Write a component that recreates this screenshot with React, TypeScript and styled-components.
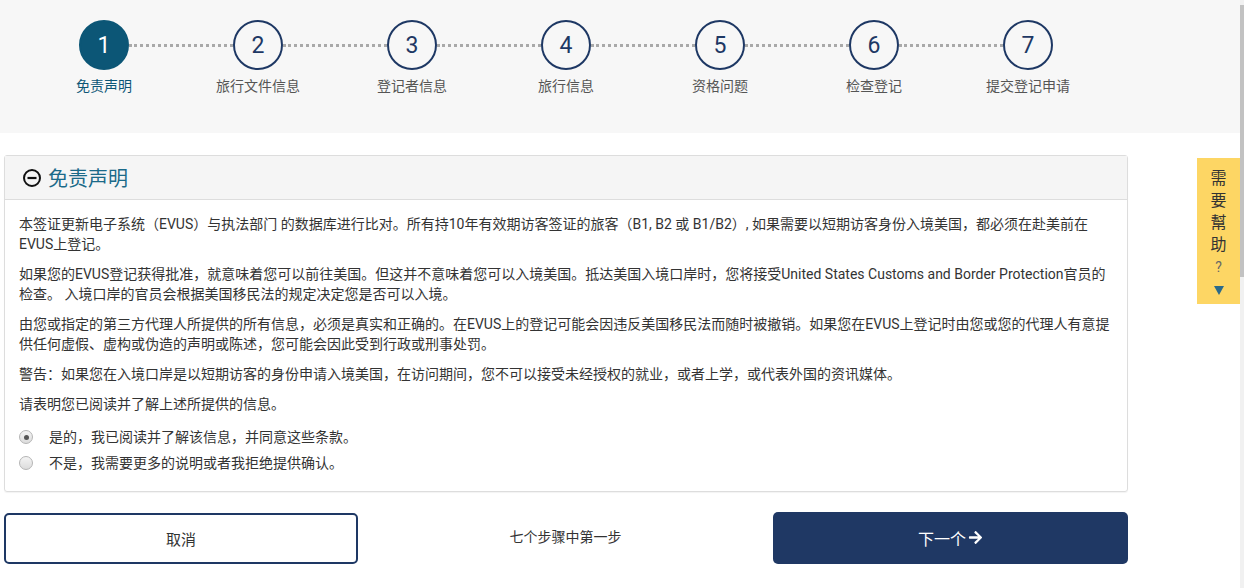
import styled, { createGlobalStyle } from "styled-components";
import { FaArrowRight } from "react-icons/fa";

const GlobalStyle = createGlobalStyle`
  html, body {
    margin: 0;
    padding: 0;
    overflow: hidden;
    background: #ffffff;
  }
  body {
    font-family: Roboto, "Noto Sans CJK SC", "Noto Sans", sans-serif;
    color: #333333;
  }
`;

const STEPS = [
  "免责声明",
  "旅行文件信息",
  "登记者信息",
  "旅行信息",
  "资格问题",
  "检查登记",
  "提交登记申请",
];

const PARAGRAPHS = [
  "本签证更新电子系统（EVUS）与执法部门 的数据库进行比对。所有持10年有效期访客签证的旅客（B1, B2 或 B1/B2）, 如果需要以短期访客身份入境美国，都必须在赴美前在EVUS上登记。",
  "如果您的EVUS登记获得批准，就意味着您可以前往美国。但这并不意味着您可以入境美国。抵达美国入境口岸时，您将接受United States Customs and Border Protection官员的检查。 入境口岸的官员会根据美国移民法的规定决定您是否可以入境。",
  "由您或指定的第三方代理人所提供的所有信息，必须是真实和正确的。在EVUS上的登记可能会因违反美国移民法而随时被撤销。如果您在EVUS上登记时由您或您的代理人有意提供任何虚假、虚构或伪造的声明或陈述，您可能会因此受到行政或刑事处罚。",
  "警告：如果您在入境口岸是以短期访客的身份申请入境美国，在访问期间，您不可以接受未经授权的就业，或者上学，或代表外国的资讯媒体。",
  "请表明您已阅读并了解上述所提供的信息。",
];

const Page = styled.div`
  width: 1240px;
  min-height: 588px;
`;

const StepBand = styled.div`
  height: 133px;
  background: #f7f7f7;
  padding: 20px 0 0 27px;
  box-sizing: border-box;
  display: flex;
`;

const Step = styled.div`
  width: 154px;
  display: flex;
  flex-direction: column;
  align-items: center;
  position: relative;
`;

const Connector = styled.div`
  position: absolute;
  top: 24px;
  left: 102px;
  width: 104px;
  border-top: 3px dotted #a9a9a9;
`;

const Circle = styled.div<{ $active?: boolean }>`
  width: 50px;
  height: 50px;
  box-sizing: border-box;
  border-radius: 50%;
  border: 2px solid ${(p) => (p.$active ? "#0c5676" : "#1e3864")};
  background: ${(p) => (p.$active ? "#0c5676" : "#f7f7f7")};
  color: ${(p) => (p.$active ? "#ffffff" : "#1e3864")};
  display: flex;
  align-items: center;
  justify-content: center;
  font-size: 23px;
  position: relative;
  z-index: 1;
`;

const StepLabel = styled.div<{ $active?: boolean }>`
  margin-top: 5px;
  font-size: 14px;
  color: ${(p) => (p.$active ? "#0c5676" : "#555555")};
  white-space: nowrap;
`;

const Main = styled.div`
  width: 1124px;
  margin: 22px 0 0 4px;
`;

const Panel = styled.div`
  border: 1px solid #dddddd;
  border-radius: 3px;
  box-shadow: 0 1px 1px rgba(0, 0, 0, 0.05);
`;

const PanelHeader = styled.div`
  height: 44px;
  background: #f5f5f5;
  border-bottom: 1px solid #dddddd;
  display: flex;
  align-items: center;
  gap: 6px;
  padding-left: 17px;
  box-sizing: border-box;
`;

const PanelTitle = styled.h2`
  margin: 0;
  font-size: 20px;
  font-weight: 400;
  color: #1b6a89;
`;

const PanelBody = styled.div`
  padding: 14px 15px 15px 14px;
  font-size: 14px;
  line-height: 20px;
`;

const Paragraph = styled.p`
  margin: 0 0 10px;
`;

const RadioRow = styled.label`
  display: flex;
  align-items: center;
  gap: 16px;
  height: 26px;
`;

const RadioDot = styled.span<{ $checked?: boolean }>`
  width: 12px;
  height: 12px;
  border-radius: 50%;
  border: 1px solid #b5b5b5;
  background: linear-gradient(#f4f4f4, #dcdcdc);
  display: flex;
  align-items: center;
  justify-content: center;
  &::after {
    content: "";
    width: 5px;
    height: 5px;
    border-radius: 50%;
    background: ${(p) => (p.$checked ? "#555555" : "transparent")};
  }
`;

const Actions = styled.div`
  margin-top: 21px;
  display: grid;
  grid-template-columns: 354px 1fr 355px;
  align-items: center;
`;

const CancelButton = styled.button`
  height: 51px;
  border: 2px solid #1e3864;
  border-radius: 5px;
  background: #ffffff;
  font-family: inherit;
  font-size: 15px;
  color: #333333;
`;

const StepCount = styled.div`
  text-align: center;
  font-size: 14px;
  color: #333333;
  margin-top: -6px;
`;

const NextButton = styled.button`
  height: 52px;
  margin-top: -2px;
  border: none;
  border-radius: 5px;
  background: #1f3864;
  color: #ffffff;
  font-family: inherit;
  font-size: 16px;
  display: flex;
  align-items: center;
  justify-content: center;
  gap: 2px;
`;

const HelpTab = styled.div`
  position: fixed;
  top: 158px;
  left: 1197px;
  width: 43px;
  height: 146px;
  background: #fdd664;
  box-sizing: border-box;
  padding-top: 10px;
  display: flex;
  flex-direction: column;
  align-items: center;
  font-size: 16px;
  line-height: 22px;
  color: #333333;
`;

const HelpQuestion = styled.span`
  font-size: 14px;
  color: #666666;
`;

const HelpArrow = styled.span`
  margin-top: 8px;
  width: 0;
  height: 0;
  border-left: 5px solid transparent;
  border-right: 5px solid transparent;
  border-top: 9px solid #2b6a8a;
`;

const ScrollTrack = styled.div`
  position: fixed;
  top: 0;
  right: 0;
  width: 4px;
  height: 100%;
  background: #f1f1f1;
`;

const ScrollThumb = styled.div`
  margin-top: 5px;
  height: 272px;
  background: #c2c2c2;
`;

const MinusCircleIcon = () => (
  <svg width="20" height="20" viewBox="0 0 20 20">
    <circle cx="10" cy="10" r="8" fill="none" stroke="#111" strokeWidth="2" />
    <line x1="5.5" y1="10" x2="14.5" y2="10" stroke="#111" strokeWidth="2.2" />
  </svg>
);

export default function App() {
  return (
    <Page>
      <GlobalStyle />
      <StepBand>
        {STEPS.map((label, i) => (
          <Step key={label}>
            {i < STEPS.length - 1 && <Connector />}
            <Circle $active={i === 0}>{i + 1}</Circle>
            <StepLabel $active={i === 0}>{label}</StepLabel>
          </Step>
        ))}
      </StepBand>
      <Main>
        <Panel>
          <PanelHeader>
            <MinusCircleIcon />
            <PanelTitle>免责声明</PanelTitle>
          </PanelHeader>
          <PanelBody>
            {PARAGRAPHS.map((text) => (
              <Paragraph key={text}>{text}</Paragraph>
            ))}
            <RadioRow>
              <RadioDot $checked />
              是的，我已阅读并了解该信息，并同意这些条款。
            </RadioRow>
            <RadioRow>
              <RadioDot />
              不是，我需要更多的说明或者我拒绝提供确认。
            </RadioRow>
          </PanelBody>
        </Panel>
        <Actions>
          <CancelButton>取消</CancelButton>
          <StepCount>七个步骤中第一步</StepCount>
          <NextButton>
            下一个 <FaArrowRight size={15} />
          </NextButton>
        </Actions>
      </Main>
      <HelpTab>
        <span>需</span>
        <span>要</span>
        <span>幫</span>
        <span>助</span>
        <HelpQuestion>?</HelpQuestion>
        <HelpArrow />
      </HelpTab>
      <ScrollTrack>
        <ScrollThumb />
      </ScrollTrack>
    </Page>
  );
}
